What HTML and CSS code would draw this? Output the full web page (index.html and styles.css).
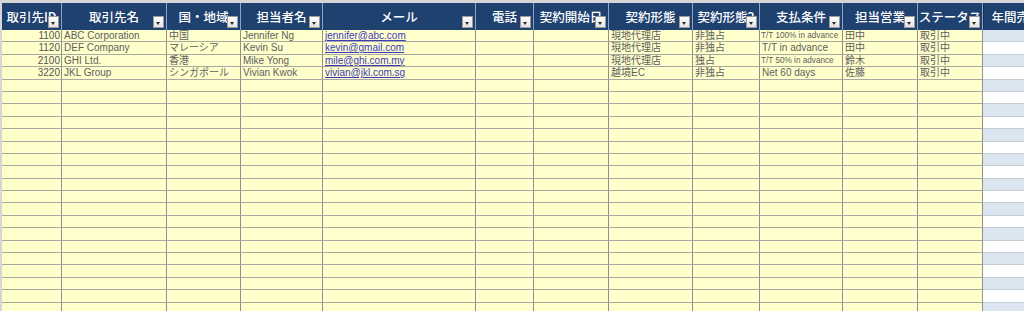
FILE: index.html
```html
<!DOCTYPE html>
<html lang="ja">
<head>
<meta charset="utf-8">
<title>取引先一覧</title>
<link rel="stylesheet" href="styles.css">
</head>
<body>
<div class="sheet">
  <div class="row head">
    <div class="hc"><span>取引先ID</span><i class="filter"></i></div>
    <div class="hc"><span>取引先名</span><i class="filter"></i></div>
    <div class="hc"><span>国・地域</span><i class="filter"></i></div>
    <div class="hc"><span>担当者名</span><i class="filter"></i></div>
    <div class="hc"><span>メール</span><i class="filter"></i></div>
    <div class="hc"><span>電話</span><i class="filter"></i></div>
    <div class="hc"><span>契約開始日</span><i class="filter"></i></div>
    <div class="hc"><span>契約形態</span><i class="filter"></i></div>
    <div class="hc"><span>契約形態2</span><i class="filter"></i></div>
    <div class="hc"><span>支払条件</span><i class="filter"></i></div>
    <div class="hc"><span>担当営業</span><i class="filter"></i></div>
    <div class="hc"><span>ステータス</span><i class="filter"></i></div>
    <div class="hc last"><span>年間売上</span></div>
  </div>
  <div class="rows">
    <div class="row r"><div class="c num">1100</div><div class="c">ABC Corporation</div><div class="c">中国</div><div class="c">Jennifer Ng</div><div class="c"><a href="#">jennifer@abc.com</a></div><div class="c"></div><div class="c"></div><div class="c">現地代理店</div><div class="c">非独占</div><div class="c sm">T/T 100% in advance</div><div class="c">田中</div><div class="c">取引中</div><div class="c"></div></div>
    <div class="row r"><div class="c num">1120</div><div class="c">DEF Company</div><div class="c">マレーシア</div><div class="c">Kevin Su</div><div class="c"><a href="#">kevin@gmail.com</a></div><div class="c"></div><div class="c"></div><div class="c">現地代理店</div><div class="c">非独占</div><div class="c">T/T in advance</div><div class="c">田中</div><div class="c">取引中</div><div class="c"></div></div>
    <div class="row r"><div class="c num">2100</div><div class="c">GHI Ltd.</div><div class="c">香港</div><div class="c">Mike Yong</div><div class="c"><a href="#">mile@ghi.com.my</a></div><div class="c"></div><div class="c"></div><div class="c">現地代理店</div><div class="c">独占</div><div class="c sm">T/T 50% in advance</div><div class="c">鈴木</div><div class="c">取引中</div><div class="c"></div></div>
    <div class="row r"><div class="c num">3220</div><div class="c">JKL Group</div><div class="c">シンガポール</div><div class="c">Vivian Kwok</div><div class="c"><a href="#">vivian@jkl.com.sg</a></div><div class="c"></div><div class="c"></div><div class="c">越境EC</div><div class="c">非独占</div><div class="c">Net 60 days</div><div class="c">佐藤</div><div class="c">取引中</div><div class="c"></div></div>
    <div class="row r"><div class="c"></div><div class="c"></div><div class="c"></div><div class="c"></div><div class="c"></div><div class="c"></div><div class="c"></div><div class="c"></div><div class="c"></div><div class="c"></div><div class="c"></div><div class="c"></div><div class="c"></div></div>
    <div class="row r"><div class="c"></div><div class="c"></div><div class="c"></div><div class="c"></div><div class="c"></div><div class="c"></div><div class="c"></div><div class="c"></div><div class="c"></div><div class="c"></div><div class="c"></div><div class="c"></div><div class="c"></div></div>
    <div class="row r"><div class="c"></div><div class="c"></div><div class="c"></div><div class="c"></div><div class="c"></div><div class="c"></div><div class="c"></div><div class="c"></div><div class="c"></div><div class="c"></div><div class="c"></div><div class="c"></div><div class="c"></div></div>
    <div class="row r"><div class="c"></div><div class="c"></div><div class="c"></div><div class="c"></div><div class="c"></div><div class="c"></div><div class="c"></div><div class="c"></div><div class="c"></div><div class="c"></div><div class="c"></div><div class="c"></div><div class="c"></div></div>
    <div class="row r"><div class="c"></div><div class="c"></div><div class="c"></div><div class="c"></div><div class="c"></div><div class="c"></div><div class="c"></div><div class="c"></div><div class="c"></div><div class="c"></div><div class="c"></div><div class="c"></div><div class="c"></div></div>
    <div class="row r"><div class="c"></div><div class="c"></div><div class="c"></div><div class="c"></div><div class="c"></div><div class="c"></div><div class="c"></div><div class="c"></div><div class="c"></div><div class="c"></div><div class="c"></div><div class="c"></div><div class="c"></div></div>
    <div class="row r"><div class="c"></div><div class="c"></div><div class="c"></div><div class="c"></div><div class="c"></div><div class="c"></div><div class="c"></div><div class="c"></div><div class="c"></div><div class="c"></div><div class="c"></div><div class="c"></div><div class="c"></div></div>
    <div class="row r"><div class="c"></div><div class="c"></div><div class="c"></div><div class="c"></div><div class="c"></div><div class="c"></div><div class="c"></div><div class="c"></div><div class="c"></div><div class="c"></div><div class="c"></div><div class="c"></div><div class="c"></div></div>
    <div class="row r"><div class="c"></div><div class="c"></div><div class="c"></div><div class="c"></div><div class="c"></div><div class="c"></div><div class="c"></div><div class="c"></div><div class="c"></div><div class="c"></div><div class="c"></div><div class="c"></div><div class="c"></div></div>
    <div class="row r"><div class="c"></div><div class="c"></div><div class="c"></div><div class="c"></div><div class="c"></div><div class="c"></div><div class="c"></div><div class="c"></div><div class="c"></div><div class="c"></div><div class="c"></div><div class="c"></div><div class="c"></div></div>
    <div class="row r"><div class="c"></div><div class="c"></div><div class="c"></div><div class="c"></div><div class="c"></div><div class="c"></div><div class="c"></div><div class="c"></div><div class="c"></div><div class="c"></div><div class="c"></div><div class="c"></div><div class="c"></div></div>
    <div class="row r"><div class="c"></div><div class="c"></div><div class="c"></div><div class="c"></div><div class="c"></div><div class="c"></div><div class="c"></div><div class="c"></div><div class="c"></div><div class="c"></div><div class="c"></div><div class="c"></div><div class="c"></div></div>
    <div class="row r"><div class="c"></div><div class="c"></div><div class="c"></div><div class="c"></div><div class="c"></div><div class="c"></div><div class="c"></div><div class="c"></div><div class="c"></div><div class="c"></div><div class="c"></div><div class="c"></div><div class="c"></div></div>
    <div class="row r"><div class="c"></div><div class="c"></div><div class="c"></div><div class="c"></div><div class="c"></div><div class="c"></div><div class="c"></div><div class="c"></div><div class="c"></div><div class="c"></div><div class="c"></div><div class="c"></div><div class="c"></div></div>
    <div class="row r"><div class="c"></div><div class="c"></div><div class="c"></div><div class="c"></div><div class="c"></div><div class="c"></div><div class="c"></div><div class="c"></div><div class="c"></div><div class="c"></div><div class="c"></div><div class="c"></div><div class="c"></div></div>
    <div class="row r"><div class="c"></div><div class="c"></div><div class="c"></div><div class="c"></div><div class="c"></div><div class="c"></div><div class="c"></div><div class="c"></div><div class="c"></div><div class="c"></div><div class="c"></div><div class="c"></div><div class="c"></div></div>
    <div class="row r"><div class="c"></div><div class="c"></div><div class="c"></div><div class="c"></div><div class="c"></div><div class="c"></div><div class="c"></div><div class="c"></div><div class="c"></div><div class="c"></div><div class="c"></div><div class="c"></div><div class="c"></div></div>
    <div class="row r"><div class="c"></div><div class="c"></div><div class="c"></div><div class="c"></div><div class="c"></div><div class="c"></div><div class="c"></div><div class="c"></div><div class="c"></div><div class="c"></div><div class="c"></div><div class="c"></div><div class="c"></div></div>
    <div class="row r"><div class="c"></div><div class="c"></div><div class="c"></div><div class="c"></div><div class="c"></div><div class="c"></div><div class="c"></div><div class="c"></div><div class="c"></div><div class="c"></div><div class="c"></div><div class="c"></div><div class="c"></div></div>
    <div class="row r"><div class="c"></div><div class="c"></div><div class="c"></div><div class="c"></div><div class="c"></div><div class="c"></div><div class="c"></div><div class="c"></div><div class="c"></div><div class="c"></div><div class="c"></div><div class="c"></div><div class="c"></div></div>
  </div>
</div>
</body>
</html>
```
FILE: styles.css
```css
:root {
  --cols: 60px 105px 74px 82px 153px 58px 75px 84px 67px 83px 75px 65px 66px;
}
html, body {
  margin: 0;
  height: 100%;
  overflow: hidden;
  background: #cfcfcf;
}
.sheet {
  width: 1024px;
  height: 311px;
  box-sizing: border-box;
  padding: 3px 0 0 2px;
  overflow: hidden;
  background: #d6d6d6;
}
.row {
  display: grid;
  grid-template-columns: var(--cols);
  width: max-content;
}
.head {
  height: 27px;
  background: #1f416f;
}
.hc {
  position: relative;
  display: flex;
  align-items: center;
  justify-content: center;
  overflow: hidden;
  border-right: 1px solid #8ea4c2;
  color: #fff;
  font: 500 12.5px/14px "Noto Sans CJK JP", sans-serif;
  white-space: nowrap;
}
.hc span {
  flex: none;
}
.hc.last {
  border-left: 1px solid #14305a;
  border-right: none;
}
.filter {
  position: absolute;
  right: 2px;
  bottom: 2px;
  width: 11px;
  height: 12px;
  box-sizing: border-box;
  border: 1px solid #9b9b9b;
  background: linear-gradient(#ffffff, #e4e4e4);
}
.filter::after {
  content: "";
  position: absolute;
  left: 2px;
  top: 5px;
  border-left: 2.5px solid transparent;
  border-right: 2.5px solid transparent;
  border-top: 3px solid #2a2a2a;
}
.r {
  height: 12.4px;
}
.c {
  box-sizing: border-box;
  background: #ffffcc;
  border-right: 1px solid #8f8f8f;
  border-bottom: 1px solid #a9a9a4;
  padding-left: 2px;
  overflow: hidden;
  white-space: nowrap;
  color: #5e5e5e;
  font: 10px/11px "Liberation Sans", "Noto Sans CJK JP", sans-serif;
}
.c.num {
  text-align: right;
  padding: 0 1px 0 0;
  color: #555;
}
.c.sm {
  font-size: 8.2px;
  padding-left: 1px;
}
.c a {
  color: #3b3bbd;
  text-decoration: underline;
}
.r .c:last-child {
  background: #ffffff;
  border-right: none;
  border-bottom-color: #c6ccd4;
}
.rows .r:nth-child(odd) .c:last-child {
  background: #dce6f1;
}
```
